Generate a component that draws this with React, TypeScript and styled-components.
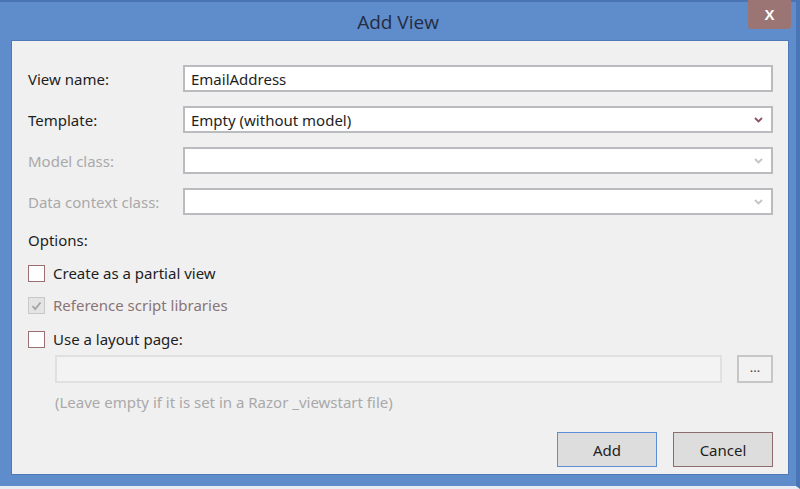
import React from "react";
import styled, { createGlobalStyle } from "styled-components";

const GlobalStyle = createGlobalStyle`
  html, body {
    margin: 0;
    padding: 0;
    background: #5f8cca;
  }
  * {
    box-sizing: border-box;
  }
`;

const Window = styled.div`
  width: 800px;
  height: 489px;
  background: #5f8cca;
  border-top: 2px solid #4a74b2;
  border-right: 4px solid #4a76b8;
  border-bottom: 3px solid #e8ecf3;
  display: flex;
  flex-direction: column;
  font-family: "Noto Sans", "Open Sans", sans-serif;
  color: #1e1e1e;
`;

const TitleBar = styled.div`
  position: relative;
  height: 38px;
  display: flex;
  align-items: center;
  justify-content: center;
`;

const Title = styled.div`
  font-family: "Open Sans", "Noto Sans", sans-serif;
  font-size: 19px;
  color: #232c44;
  margin-top: 2px;
`;

const CloseButton = styled.div`
  position: absolute;
  top: -2px;
  right: 5px;
  width: 43px;
  height: 29px;
  background: #9a7574;
  border-radius: 0 0 3px 3px;
  color: #ffffff;
  font-family: "Liberation Sans", sans-serif;
  font-weight: bold;
  font-size: 15px;
  display: flex;
  align-items: center;
  justify-content: center;
`;

const Panel = styled.div`
  margin: 0 7px 11px 11px;
  flex: 1;
  background: #f0f0f0;
  border: 1px solid #4d79b6;
  padding: 24px 15px 0 16px;
  display: flex;
  flex-direction: column;
`;

const FormGrid = styled.div`
  display: grid;
  grid-template-columns: 155px 1fr;
  grid-auto-rows: 27px;
  row-gap: 14px;
`;

const Label = styled.div<{ $disabled?: boolean }>`
  font-size: 15px;
  display: flex;
  align-items: center;
  color: ${(p) => (p.$disabled ? "#a9a9a9" : "#1e1e1e")};
`;

const Field = styled.div<{ $muted?: boolean }>`
  background: ${(p) => (p.$muted ? "#f4f4f4" : "#ffffff")};
  border: 2px solid ${(p) => (p.$muted ? "#dedede" : "#b9bbbf")};
  display: flex;
  align-items: center;
  justify-content: space-between;
  padding: 0 8px 0 6px;
  font-size: 15px;
  color: #1e1e1e;
`;

const Chevron: React.FC<{ color: string }> = ({ color }) => (
  <svg width="9" height="6" viewBox="0 0 9 6">
    <polyline
      points="1,1 4.5,4.5 8,1"
      fill="none"
      stroke={color}
      strokeWidth="1.8"
    />
  </svg>
);

const SectionLabel = styled.div`
  font-size: 15px;
  line-height: 20px;
  margin-top: 15px;
`;

const CheckList = styled.div`
  margin-top: 13px;
  display: flex;
  flex-direction: column;
`;

const CheckRow = styled.div<{ $h: number }>`
  height: ${(p) => p.$h}px;
  display: flex;
  align-items: flex-start;
  gap: 8px;
`;

const Box = styled.div<{ $disabled?: boolean }>`
  width: 17px;
  height: 17px;
  margin-top: 2px;
  background: ${(p) => (p.$disabled ? "#e4e4e4" : "#ffffff")};
  border: 1px solid ${(p) => (p.$disabled ? "#c8c8c8" : "#9a6f72")};
  display: flex;
  align-items: center;
  justify-content: center;
`;

const CheckText = styled.div<{ $disabled?: boolean }>`
  font-size: 15px;
  line-height: 20px;
  color: ${(p) => (p.$disabled ? "#8a7475" : "#1e1e1e")};
`;

const LayoutRow = styled.div`
  margin-left: 27px;
  display: flex;
  gap: 15px;
  height: 28px;
`;

const LayoutInput = styled.div`
  flex: 1;
  background: #f3f3f3;
  border: 2px solid #e0e0e0;
`;

const BrowseButton = styled.div`
  width: 36px;
  background: #f2f2f2;
  border: 2px solid #c6c6c6;
  display: flex;
  align-items: center;
  justify-content: center;
  font-size: 13px;
  color: #444;
  padding-bottom: 4px;
`;

const Hint = styled.div`
  margin: 9px 0 0 27px;
  font-size: 15px;
  line-height: 20px;
  color: #a9a9a9;
`;

const Footer = styled.div`
  margin-top: 20px;
  display: flex;
  justify-content: flex-end;
  gap: 16px;
`;

const DialogButton = styled.div<{ $accent: string }>`
  width: 100px;
  height: 35px;
  background: #dddddd;
  border: 1px solid ${(p) => p.$accent};
  display: flex;
  align-items: center;
  justify-content: center;
  font-size: 15px;
  color: #1e1e1e;
`;

export default function App() {
  return (
    <>
      <GlobalStyle />
      <Window>
        <TitleBar>
          <Title>Add View</Title>
          <CloseButton>X</CloseButton>
        </TitleBar>
        <Panel>
          <FormGrid>
            <Label>View name:</Label>
            <Field>EmailAddress</Field>
            <Label>Template:</Label>
            <Field>
              Empty (without model)
              <Chevron color="#8a5360" />
            </Field>
            <Label $disabled>Model class:</Label>
            <Field>
              <span />
              <Chevron color="#c4c4c4" />
            </Field>
            <Label $disabled>Data context class:</Label>
            <Field>
              <span />
              <Chevron color="#c4c4c4" />
            </Field>
          </FormGrid>
          <SectionLabel>Options:</SectionLabel>
          <CheckList>
            <CheckRow $h={32}>
              <Box />
              <CheckText>Create as a partial view</CheckText>
            </CheckRow>
            <CheckRow $h={34}>
              <Box $disabled>
                <svg width="11" height="10" viewBox="0 0 11 10">
                  <polyline
                    points="1.5,5 4.2,8 9.5,1.5"
                    fill="none"
                    stroke="#a3a3a3"
                    strokeWidth="1.8"
                  />
                </svg>
              </Box>
              <CheckText $disabled>Reference script libraries</CheckText>
            </CheckRow>
            <CheckRow $h={26}>
              <Box />
              <CheckText>Use a layout page:</CheckText>
            </CheckRow>
          </CheckList>
          <LayoutRow>
            <LayoutInput />
            <BrowseButton>...</BrowseButton>
          </LayoutRow>
          <Hint>(Leave empty if it is set in a Razor _viewstart file)</Hint>
          <Footer>
            <DialogButton $accent="#5b8ed6">Add</DialogButton>
            <DialogButton $accent="#8e6c6e">Cancel</DialogButton>
          </Footer>
        </Panel>
      </Window>
    </>
  );
}
